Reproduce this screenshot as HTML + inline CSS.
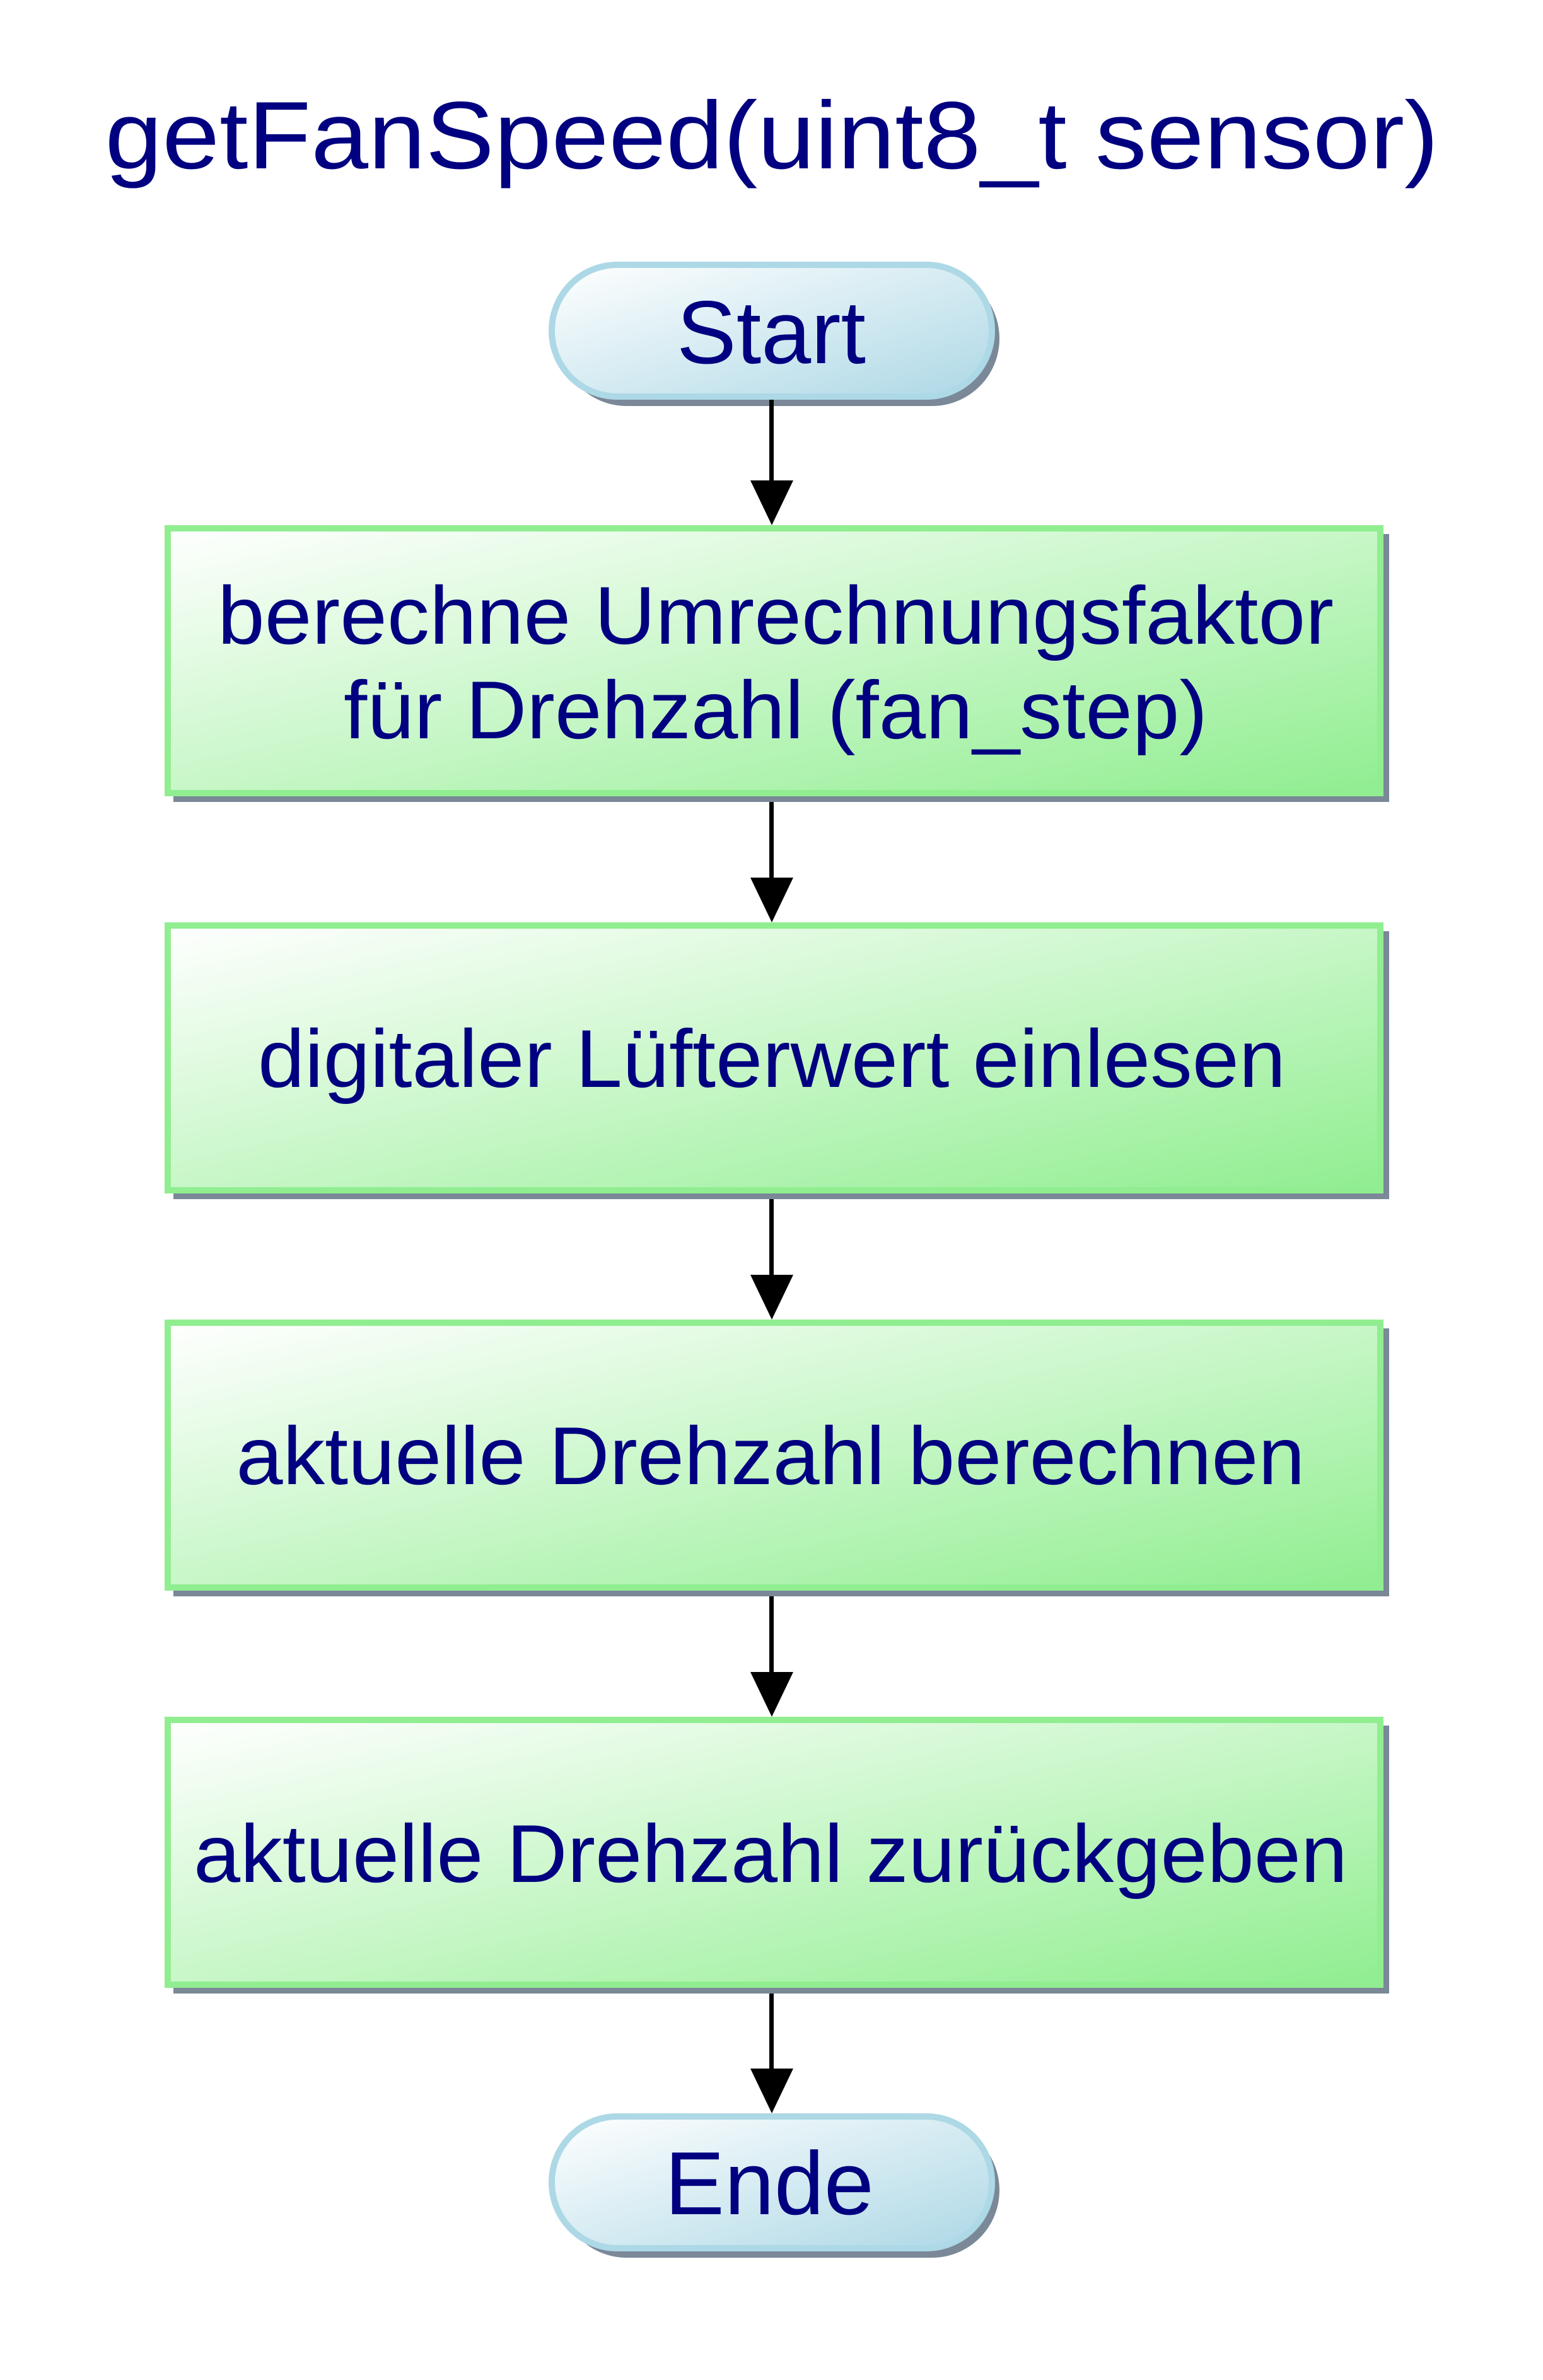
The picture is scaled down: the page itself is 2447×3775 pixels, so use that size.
<!DOCTYPE html>
<html><head><meta charset="utf-8"><style>
html,body{margin:0;padding:0;background:#fff;}
svg{display:block;}
text{font-family:"Liberation Sans",Arial,sans-serif;fill:#000080;}
</style></head><body>
<svg width="2447" height="3775" viewBox="0 0 2447 3775" xmlns="http://www.w3.org/2000/svg">
<defs>
<linearGradient id="gb" x1="0" y1="0" x2="1" y2="1"><stop offset="0" stop-color="#ffffff"/><stop offset="1" stop-color="#90ee90"/></linearGradient>
<linearGradient id="pb" x1="0" y1="0" x2="1" y2="1"><stop offset="0" stop-color="#ffffff"/><stop offset="1" stop-color="#add8e6"/></linearGradient>
</defs>
<rect width="2447" height="3775" fill="#fff"/>
<text x="1224" y="267" font-size="152" text-anchor="middle" textLength="2115" lengthAdjust="spacingAndGlyphs">getFanSpeed(uint8_t sensor)</text>

<!-- Start -->
<rect x="887" y="430" width="698" height="214" rx="107" fill="#7a8898"/>
<rect x="875" y="420" width="698" height="209" rx="104" fill="url(#pb)" stroke="#add8e6" stroke-width="10"/>
<text x="1223" y="576" font-size="142" text-anchor="middle">Start</text>

<!-- arrows -->
<g fill="#000">
<rect x="1220" y="634" width="7" height="140"/><polygon points="1190,762 1258,762 1224,833"/>
<rect x="1220" y="1263" width="7" height="140"/><polygon points="1190,1392 1258,1392 1224,1463"/>
<rect x="1220" y="1893" width="7" height="140"/><polygon points="1190,2022 1258,2022 1224,2093"/>
<rect x="1220" y="2523" width="7" height="140"/><polygon points="1190,2652 1258,2652 1224,2723"/>
<rect x="1220" y="3153" width="7" height="140"/><polygon points="1190,3281 1258,3281 1224,3352"/>
</g>

<!-- boxes -->
<g>
<rect x="275" y="847" width="1928" height="425" fill="#7a8898"/>
<rect x="266" y="838" width="1923" height="420" fill="url(#gb)" stroke="#90ee90" stroke-width="10"/>
<text x="1230" y="1021" font-size="130" text-anchor="middle" textLength="1770" lengthAdjust="spacingAndGlyphs">berechne Umrechnungsfaktor</text>
<text x="1230" y="1171" font-size="130" text-anchor="middle" textLength="1370" lengthAdjust="spacingAndGlyphs">für Drehzahl (fan_step)</text>

<rect x="275" y="1477" width="1928" height="425" fill="#7a8898"/>
<rect x="266" y="1468" width="1923" height="420" fill="url(#gb)" stroke="#90ee90" stroke-width="10"/>
<text x="1224" y="1724" font-size="130" text-anchor="middle" textLength="1630" lengthAdjust="spacingAndGlyphs">digitaler Lüfterwert einlesen</text>

<rect x="275" y="2107" width="1928" height="425" fill="#7a8898"/>
<rect x="266" y="2098" width="1923" height="420" fill="url(#gb)" stroke="#90ee90" stroke-width="10"/>
<text x="1222" y="2354" font-size="130" text-anchor="middle" textLength="1695" lengthAdjust="spacingAndGlyphs">aktuelle Drehzahl berechnen</text>

<rect x="275" y="2737" width="1928" height="425" fill="#7a8898"/>
<rect x="266" y="2728" width="1923" height="420" fill="url(#gb)" stroke="#90ee90" stroke-width="10"/>
<text x="1222" y="2985" font-size="130" text-anchor="middle" textLength="1830" lengthAdjust="spacingAndGlyphs">aktuelle Drehzahl zurückgeben</text>
</g>

<!-- Ende -->
<rect x="887" y="3367" width="698" height="214" rx="107" fill="#7a8898"/>
<rect x="875" y="3357" width="698" height="209" rx="104" fill="url(#pb)" stroke="#add8e6" stroke-width="10"/>
<text x="1220" y="3512" font-size="142" text-anchor="middle">Ende</text>
</svg>
</body></html>
